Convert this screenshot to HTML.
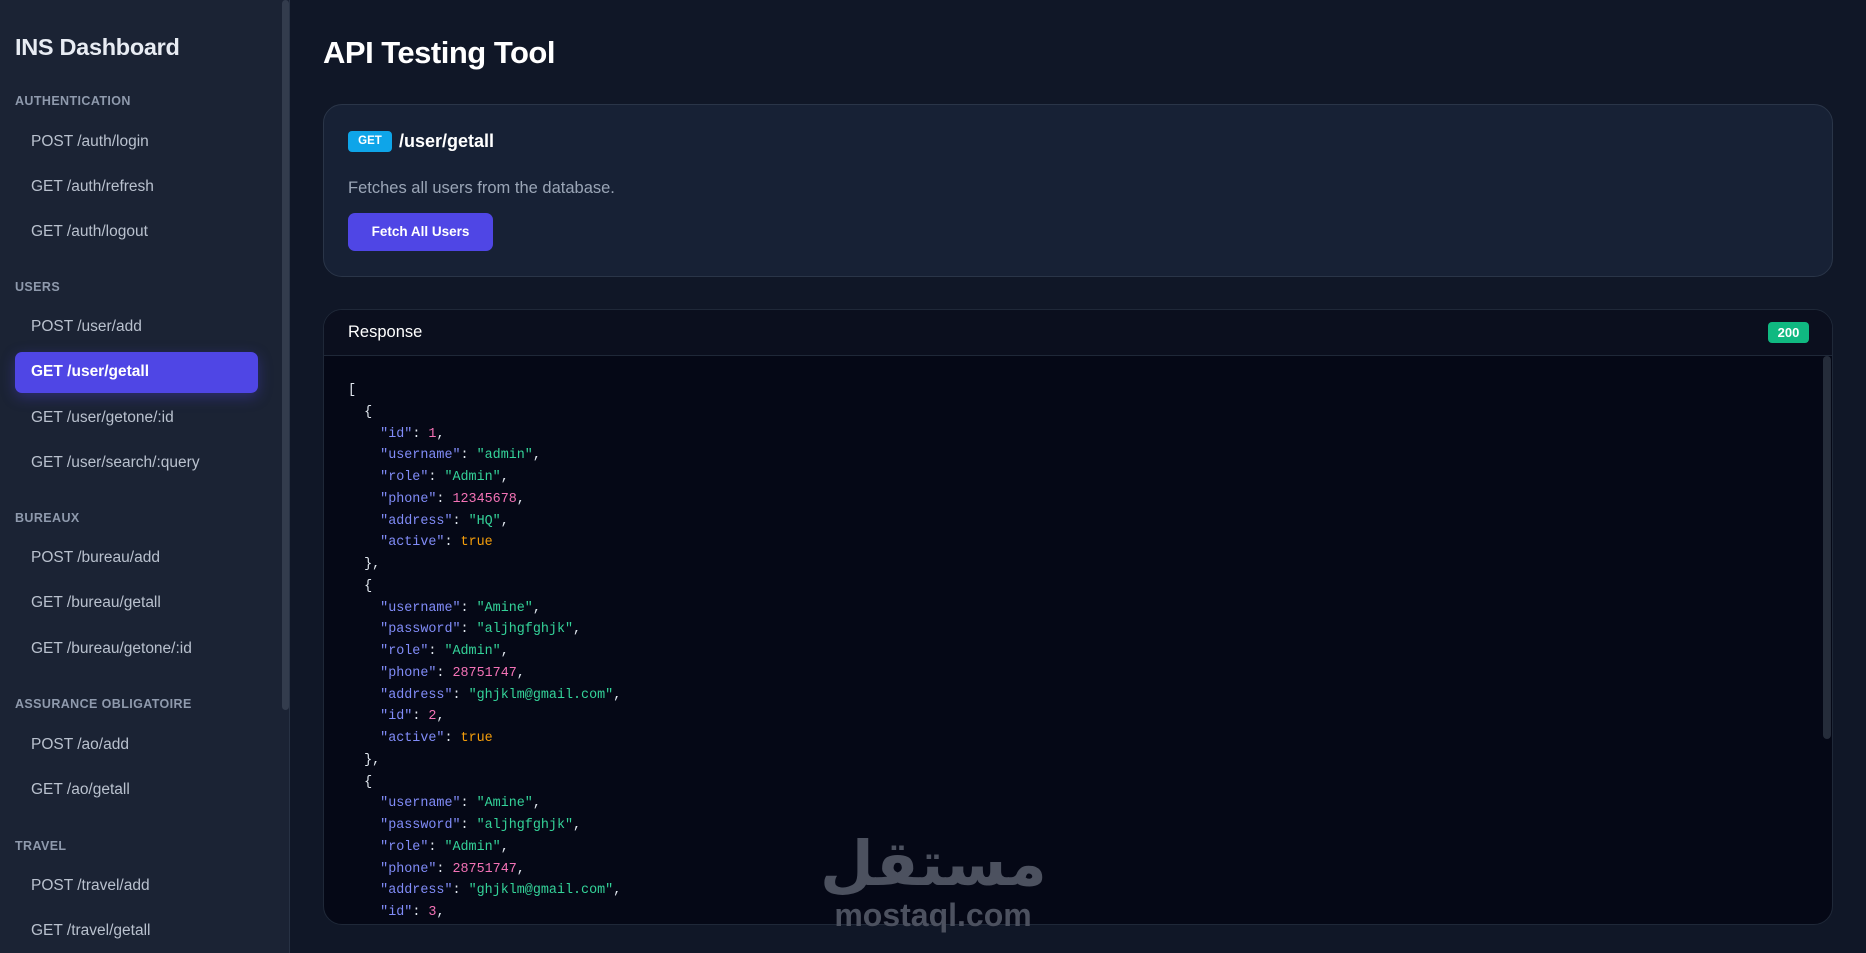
<!DOCTYPE html>
<html><head><meta charset="utf-8"><style>
*{margin:0;padding:0;box-sizing:border-box}
body{width:1866px;height:953px;overflow:hidden;background:#101727;font-family:"Liberation Sans",sans-serif;position:relative}
.sb{position:absolute;left:0;top:0;width:290px;height:953px;background:#1b2334;border-right:1px solid #283244}
.thumb{position:absolute;left:282px;top:0;width:7px;height:710px;background:#333c4d;border-radius:4px}
.h1{position:absolute;left:15px;top:34px;font-size:23.5px;font-weight:bold;color:#e8ecf3;letter-spacing:-0.3px}
.sec{position:absolute;left:15px;font-size:12.5px;font-weight:bold;color:#8f9aad;letter-spacing:0.4px;transform:translateY(-50%)}
.it{position:absolute;left:31px;font-size:15.5px;color:#b9c1ce;transform:translateY(-50%)}
.act{position:absolute;left:15px;top:352px;width:243px;height:41px;background:#4f46e5;border-radius:7px;box-shadow:0 4px 14px rgba(79,70,229,.35)}
.title{position:absolute;left:323px;top:35px;font-size:31px;font-weight:bold;color:#fff;letter-spacing:-0.5px}
.card{position:absolute;left:323px;top:104px;width:1510px;height:173px;background:#172135;border:1px solid #2a3548;border-radius:19px}
.get{position:absolute;left:348px;top:131px;width:44px;height:21px;background:#0ea5e9;border-radius:4px;color:#fff;font-size:11.5px;font-weight:bold;text-align:center;line-height:21px}
.ep{position:absolute;left:399px;top:131px;font-size:18px;font-weight:bold;color:#fff}
.desc{position:absolute;left:348px;top:179px;font-size:16.5px;color:#9aa5b6}
.btn{position:absolute;left:348px;top:213px;width:145px;height:38px;background:#4f46e5;border-radius:7px;color:#fff;font-size:13.5px;font-weight:bold;text-align:center;line-height:38px}
.resp{position:absolute;left:323px;top:309px;width:1510px;height:616px;background:#050816;border:1px solid #1f2838;border-radius:19px;overflow:hidden}
.rh{position:absolute;left:0;top:0;width:100%;height:46px;background:#0b0f1e;border-bottom:1px solid #1f2838}
.rt{position:absolute;left:24px;top:13px;font-size:16.5px;color:#fff}
.ok{position:absolute;right:23px;top:12px;width:41px;height:21px;background:#10b981;border-radius:4px;color:#fff;font-size:13px;font-weight:bold;text-align:center;line-height:21px}
.cs{position:absolute;right:1px;top:46px;width:8px;height:383px;background:#252c3a;border-radius:4px}
pre{position:absolute;left:24px;top:70px;font-family:"Liberation Mono","DejaVu Sans Mono",monospace;font-size:13.4px;line-height:21.75px;color:#e2e8f0}
.k{color:#818cf8}.s{color:#34d399}.n{color:#f472b6}.b{color:#f59e0b}
.wm{position:absolute;left:820px;top:818px;width:226px;text-align:center;color:#4c515f;font-weight:bold}
</style></head><body>
<div class="sb">
<div class="thumb"></div>
<div class="h1">INS Dashboard</div>
<div class="sec" style="top:101px">AUTHENTICATION</div>
<div class="it" style="top:142px">POST /auth/login</div>
<div class="it" style="top:187px">GET /auth/refresh</div>
<div class="it" style="top:232px">GET /auth/logout</div>
<div class="sec" style="top:287px">USERS</div>
<div class="it" style="top:327px">POST /user/add</div>
<div class="act"></div>
<div class="it" style="top:372px;color:#fff;font-weight:bold">GET /user/getall</div>
<div class="it" style="top:418px">GET /user/getone/:id</div>
<div class="it" style="top:463px">GET /user/search/:query</div>
<div class="sec" style="top:518px">BUREAUX</div>
<div class="it" style="top:558px">POST /bureau/add</div>
<div class="it" style="top:603px">GET /bureau/getall</div>
<div class="it" style="top:649px">GET /bureau/getone/:id</div>
<div class="sec" style="top:704px">ASSURANCE OBLIGATOIRE</div>
<div class="it" style="top:745px">POST /ao/add</div>
<div class="it" style="top:790px">GET /ao/getall</div>
<div class="sec" style="top:846px">TRAVEL</div>
<div class="it" style="top:886px">POST /travel/add</div>
<div class="it" style="top:931px">GET /travel/getall</div>
</div>
<div class="title">API Testing Tool</div>
<div class="card"></div>
<div class="get">GET</div>
<div class="ep">/user/getall</div>
<div class="desc">Fetches all users from the database.</div>
<div class="btn">Fetch All Users</div>
<div class="resp">
<div class="rh"><div class="rt">Response</div><div class="ok">200</div></div>
<div class="cs"></div>
<pre>[
  {
    <span class="k">"id"</span>: <span class="n">1</span>,
    <span class="k">"username"</span>: <span class="s">"admin"</span>,
    <span class="k">"role"</span>: <span class="s">"Admin"</span>,
    <span class="k">"phone"</span>: <span class="n">12345678</span>,
    <span class="k">"address"</span>: <span class="s">"HQ"</span>,
    <span class="k">"active"</span>: <span class="b">true</span>
  },
  {
    <span class="k">"username"</span>: <span class="s">"Amine"</span>,
    <span class="k">"password"</span>: <span class="s">"aljhgfghjk"</span>,
    <span class="k">"role"</span>: <span class="s">"Admin"</span>,
    <span class="k">"phone"</span>: <span class="n">28751747</span>,
    <span class="k">"address"</span>: <span class="s">"ghjklm@gmail.com"</span>,
    <span class="k">"id"</span>: <span class="n">2</span>,
    <span class="k">"active"</span>: <span class="b">true</span>
  },
  {
    <span class="k">"username"</span>: <span class="s">"Amine"</span>,
    <span class="k">"password"</span>: <span class="s">"aljhgfghjk"</span>,
    <span class="k">"role"</span>: <span class="s">"Admin"</span>,
    <span class="k">"phone"</span>: <span class="n">28751747</span>,
    <span class="k">"address"</span>: <span class="s">"ghjklm@gmail.com"</span>,
    <span class="k">"id"</span>: <span class="n">3</span>,
    <span class="k">"active"</span>: <span class="b">true</span>
  }
]</pre>
</div>
<div class="wm" style="font-family:'Noto Sans CJK SC','DejaVu Sans',sans-serif;font-size:62px;line-height:80px">مستقل</div>
<div class="wm" style="top:898px;font-size:32px;line-height:34px">mostaql.com</div>
</body></html>
